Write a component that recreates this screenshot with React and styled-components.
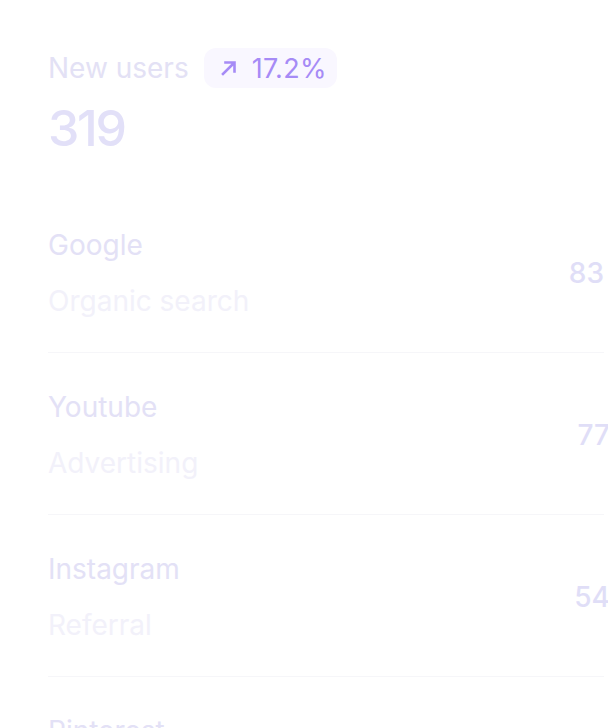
import React from 'react';
import styled, {createGlobalStyle} from 'styled-components';

const GlobalStyle = createGlobalStyle`
	html, body {
		margin: 0;
		padding: 0;
		background: #ffffff;
		overflow: hidden;
	}
	body {
		font-family: Inter, 'Noto Sans', sans-serif;
	}
`;

const Card = styled.section`
	width: 608px;
	height: 728px;
	box-sizing: border-box;
	padding: 48px 4px 0 48px;
	overflow: hidden;
`;

const Header = styled.header`
	display: flex;
	flex-direction: column;
	gap: 10px;
	margin-bottom: 33px;
`;

const TitleRow = styled.div`
	display: flex;
	align-items: center;
	gap: 15px;
	height: 40px;
`;

const Title = styled.span`
	font-size: 28px;
	line-height: 36px;
	color: #e3e1f5;
`;

const Badge = styled.span`
	display: inline-flex;
	align-items: center;
	gap: 13px;
	height: 40px;
	padding: 0 10px 0 15px;
	border-radius: 12px;
	background: #f9f7ff;
	color: #a68bf6;
	font-size: 27px;
	letter-spacing: 0.01em;
`;

const Total = styled.div`
	font-size: 50px;
	line-height: 60px;
	font-weight: 500;
	letter-spacing: -0.045em;
	color: #e2e0f8;
`;

const List = styled.ul`
	margin: 0;
	padding: 0;
	list-style: none;
`;

const Row = styled.li`
	display: flex;
	align-items: center;
	justify-content: space-between;
	padding: 36px 0 33px;
	border-bottom: 1px solid #f6f6f9;
`;

const Source = styled.div`
	display: flex;
	flex-direction: column;
	gap: 20px;
`;

const Name = styled.span`
	font-size: 28px;
	line-height: 36px;
	color: #e3e1f6;
`;

const Channel = styled.span`
	font-size: 28px;
	line-height: 36px;
	color: #f2f1fa;
`;

const Value = styled.span`
	font-size: 28px;
	font-weight: 500;
	color: #e0def7;
	transform: translateX(${(p) => p.$shift}px);
`;

const ArrowIcon = () => (
	<svg width="20" height="20" viewBox="0 0 20 20" fill="none">
		<path
			d="M4 16 L15 5 M6.5 4.5 H15.5 V13.5"
			stroke="currentColor"
			strokeWidth="2.6"
			strokeLinecap="square"
		/>
	</svg>
);

const sources = [
	{name: 'Google', channel: 'Organic search', value: '83', shift: 0},
	{name: 'Youtube', channel: 'Advertising', value: '77', shift: 6},
	{name: 'Instagram', channel: 'Referral', value: '54', shift: 6},
	{name: 'Pinterest', channel: 'Social', value: '41', shift: 0},
];

const App = () => (
	<>
		<GlobalStyle />
		<Card>
			<Header>
				<TitleRow>
					<Title>New users</Title>
					<Badge>
						<ArrowIcon />
						17.2%
					</Badge>
				</TitleRow>
				<Total>319</Total>
			</Header>
			<List>
				{sources.map((s) => (
					<Row key={s.name}>
						<Source>
							<Name>{s.name}</Name>
							<Channel>{s.channel}</Channel>
						</Source>
						<Value $shift={s.shift}>{s.value}</Value>
					</Row>
				))}
			</List>
		</Card>
	</>
);

export default App;
